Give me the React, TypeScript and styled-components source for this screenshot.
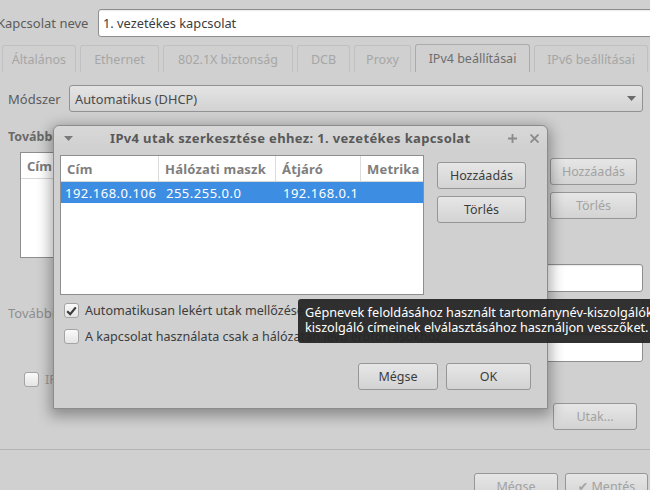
import React from "react";
import styled, { createGlobalStyle } from "styled-components";

const GlobalStyle = createGlobalStyle`
  html, body {
    margin: 0;
    padding: 0;
    background: #d0d0d0;
  }
  body {
    font-family: "Noto Sans", "DejaVu Sans", sans-serif;
    font-size: 12px;
    color: #3c3c3c;
  }
`;

const Screen = styled.div`
  position: relative;
  width: 650px;
  height: 490px;
  overflow: hidden;
  background: #d0d0d0;
`;

const MainWindow = styled.div`
  display: flex;
  flex-direction: column;
`;

const NameRow = styled.div`
  display: flex;
  align-items: center;
  gap: 12px;
  height: 28px;
  margin: 9px -20px 0 -3px;
`;

const Label = styled.span<{ $w?: number; $muted?: boolean }>`
  flex: 0 0 ${(p) => (p.$w ? `${p.$w}px` : "auto")};
  min-width: 0;
  color: ${(p) => (p.$muted ? "#8e8e8e" : "#5c5c5c")};
  font-size: 13px;
  white-space: nowrap;
`;

const Entry = styled.div`
  flex: 1;
  height: 28px;
  box-sizing: border-box;
  border: 1px solid #8e8e8e;
  border-radius: 3px;
  background: #fff;
  box-shadow: inset 0 1px 1px rgba(0, 0, 0, 0.08);
  display: flex;
  align-items: center;
  padding: 0 4px;
  color: #3c3c3c;
  font-size: 12.8px;
`;

const TabBar = styled.div`
  display: flex;
  gap: 4px;
  height: 28px;
  margin-top: 7px;
  padding-left: 2px;
`;

const Tab = styled.div<{ $w: number; $active?: boolean }>`
  flex: 0 0 ${(p) => p.$w}px;
  box-sizing: border-box;
  display: flex;
  align-items: center;
  justify-content: center;
  border: 1px solid ${(p) => (p.$active ? "#ababab" : "#c0c0c0")};
  border-bottom: none;
  border-radius: 3px 3px 0 0;
  margin-top: ${(p) => (p.$active ? 0 : 1)}px;
  color: ${(p) => (p.$active ? "#6e6e6e" : "#a6a6a6")};
  font-size: 12.5px;
  white-space: nowrap;
`;

const Page = styled.div`
  display: flex;
  flex-direction: column;
  padding: 0 7px 0 8px;
`;

const MethodRow = styled.div`
  display: flex;
  align-items: center;
  gap: 12px;
  height: 27px;
  margin-top: 13px;
`;

const Combo = styled.div`
  flex: 1;
  height: 27px;
  box-sizing: border-box;
  border: 1px solid #929292;
  border-radius: 3px;
  background: linear-gradient(#e4e4e4, #d2d2d2);
  display: flex;
  align-items: center;
  justify-content: space-between;
  padding: 0 6px 0 5px;
  color: #4a4a4a;
  font-size: 12.8px;
`;

const SectionTitle = styled.div`
  margin-top: 17px;
  line-height: 16px;
  font-weight: bold;
  font-size: 12.5px;
  color: #6a6a6a;
`;

const AddressArea = styled.div`
  display: grid;
  grid-template-columns: 1fr 87px;
  gap: 13px;
  margin: 7px 6px 0 12px;
`;

const ListBox = styled.div`
  height: 106px;
  box-sizing: border-box;
  border: 1px solid #8e8e8e;
  background: #fff;
`;

const ListHeader = styled.div`
  height: 26px;
  box-sizing: border-box;
  border-bottom: 1px solid #d8d8d8;
  display: flex;
  align-items: center;
  padding-left: 6px;
  font-weight: bold;
  font-size: 13px;
  color: #7c7c7c;
`;

const ButtonColumn = styled.div<{ $top: number }>`
  display: flex;
  flex-direction: column;
  gap: 7px;
  margin-top: ${(p) => p.$top}px;
`;

const Button = styled.div<{ $w?: number; $disabled?: boolean }>`
  width: ${(p) => (p.$w ? `${p.$w}px` : "auto")};
  height: 27px;
  box-sizing: border-box;
  border: 1px solid #969696;
  border-radius: 3px;
  background: linear-gradient(#e6e6e6, #d3d3d3);
  display: flex;
  align-items: center;
  justify-content: center;
  gap: 5px;
  color: ${(p) => (p.$disabled ? "#a2a2a2" : "#3c3c3c")};
  font-size: 12.5px;
  white-space: nowrap;
`;

const EntryGrid = styled.div`
  display: grid;
  grid-template-columns: max-content 1fr;
  column-gap: 12px;
  row-gap: 7px;
  align-items: center;
  margin-top: 6px;
`;

const GridLabel = styled.span`
  justify-self: end;
  color: #8e8e8e;
  font-size: 13px;
  white-space: nowrap;
`;

const CheckRow = styled.label<{ $top: number; $left?: number; $muted?: boolean }>`
  display: flex;
  align-items: center;
  gap: 6px;
  height: 15px;
  margin-top: ${(p) => p.$top}px;
  margin-left: ${(p) => p.$left || 0}px;
  color: ${(p) => (p.$muted ? "#9a9a9a" : "#3c3c3c")};
  font-size: 12.6px;
  white-space: nowrap;
`;

const CheckBox = styled.span`
  flex: 0 0 15px;
  height: 15px;
  box-sizing: border-box;
  border: 1px solid #a4a4a4;
  border-radius: 3px;
  background: linear-gradient(#fafafa, #e4e4e4);
  display: flex;
  align-items: center;
  justify-content: center;
`;

const RoutesRow = styled.div`
  display: flex;
  justify-content: flex-end;
  margin: 16px 6px 0 0;
`;

const Separator = styled.div`
  height: 1px;
  background: #b4b4b4;
  margin-top: 19px;
`;

const ActionRow = styled.div`
  display: flex;
  justify-content: flex-end;
  gap: 7px;
  margin-top: 23px;
  padding-right: 2px;
`;

/* the modal dialog floats over the main window */
const Dialog = styled.div`
  position: absolute;
  left: 53px;
  top: 125px;
  width: 495px;
  height: 284px;
  box-sizing: border-box;
  border: 1px solid #8c8c8c;
  border-radius: 6px 6px 0 0;
  background: #d0d0d0;
  box-shadow: 0 4px 14px 3px rgba(0, 0, 0, 0.33);
  display: flex;
  flex-direction: column;
`;

const TitleBar = styled.div`
  height: 24px;
  display: flex;
  align-items: center;
  padding: 0 8px 0 10px;
  border-radius: 6px 6px 0 0;
  background: linear-gradient(#d8d8d8, #d0d0d0);
`;

const Title = styled.div`
  flex: 1;
  padding-left: 37px;
  font-weight: bold;
  color: #595959;
  font-size: 13px;
  letter-spacing: 0.35px;
  white-space: nowrap;
`;

const TitleButtons = styled.div`
  display: flex;
  gap: 13px;
  align-items: center;
`;

const DialogBody = styled.div`
  display: flex;
  flex-direction: column;
  padding: 5px 16px 0 6px;
`;

const TopRow = styled.div`
  display: flex;
  gap: 13px;
`;

const Tree = styled.div`
  width: 364px;
  height: 140px;
  box-sizing: border-box;
  border: 1px solid #8e8e8e;
  background: #fff;
`;

const TreeRow = styled.div<{ $header?: boolean; $selected?: boolean }>`
  display: grid;
  grid-template-columns: 98px 117px 85px 1fr;
  height: ${(p) => (p.$header ? 26 : 21)}px;
  box-sizing: border-box;
  border-bottom: ${(p) => (p.$header ? "1px solid #d6d6d6" : "none")};
  background: ${(p) => (p.$selected ? "#3d8ee2" : "transparent")};
  color: ${(p) => (p.$header ? "#7e7e7e" : p.$selected ? "#fff" : "#3c3c3c")};
  font-weight: ${(p) => (p.$header ? "bold" : "normal")};
  font-size: 13px;
  letter-spacing: ${(p) => (p.$header ? 0.2 : 0.5)}px;
`;

const Cell = styled.div<{ $header?: boolean; $first?: boolean; $last?: boolean }>`
  display: flex;
  align-items: center;
  padding-left: ${(p) => (p.$header ? 6 : p.$first ? 4 : 7)}px;
  border-right: ${(p) =>
    p.$header && !p.$last ? "1px solid #dcdcdc" : "none"};
  white-space: nowrap;
  overflow: hidden;
`;

const CheckList = styled.div`
  display: flex;
  flex-direction: column;
  gap: 11px;
  margin: 8px 0 0 4px;
`;

const Footer = styled.div`
  display: flex;
  justify-content: flex-end;
  gap: 8px;
  margin-top: 19px;
`;

const Tooltip = styled.div`
  position: absolute;
  left: 298px;
  top: 299px;
  width: 380px;
  height: 44px;
  box-sizing: border-box;
  padding: 6px 7px;
  background: rgba(38, 38, 38, 0.95);
  border-radius: 3px;
  color: #fff;
  font-size: 12.7px;
  line-height: 15px;
  white-space: nowrap;
`;

const Check = () => (
  <svg width="11" height="10" viewBox="0 0 11 10">
    <path d="M1.2 5.2 L4.2 8.2 L9.8 1.4" fill="none" stroke="#3a3a3a" strokeWidth="2.2" />
  </svg>
);

const DownArrow = ({ color = "#6a6a6a" }: { color?: string }) => (
  <svg width="9" height="5" viewBox="0 0 9 5">
    <path d="M0 0 H9 L4.5 5 Z" fill={color} />
  </svg>
);

const PlusIcon = () => (
  <svg width="9" height="9" viewBox="0 0 9 9">
    <path d="M4.5 0 V9 M0 4.5 H9" stroke="#8a8a8a" strokeWidth="1.8" />
  </svg>
);

const CloseIcon = () => (
  <svg width="9" height="9" viewBox="0 0 9 9">
    <path d="M0.5 0.5 L8.5 8.5 M8.5 0.5 L0.5 8.5" stroke="#8a8a8a" strokeWidth="1.8" />
  </svg>
);

const tabs = [
  { label: "Általános", w: 74 },
  { label: "Ethernet", w: 79 },
  { label: "802.1X biztonság", w: 130 },
  { label: "DCB", w: 53 },
  { label: "Proxy", w: 57 },
  { label: "IPv4 beállításai", w: 115, active: true },
  { label: "IPv6 beállításai", w: 114 },
];

const routes = [
  { address: "192.168.0.106", mask: "255.255.0.0", gateway: "192.168.0.1", metric: "" },
];

export default function App() {
  return (
    <>
      <GlobalStyle />
      <Screen>
        <MainWindow>
          <NameRow>
            <Label $w={89}>Kapcsolat neve</Label>
            <Entry>1. vezetékes kapcsolat</Entry>
          </NameRow>

          <TabBar>
            {tabs.map((t) => (
              <Tab key={t.label} $w={t.w} $active={t.active}>
                {t.label}
              </Tab>
            ))}
          </TabBar>

          <Page>
            <MethodRow>
              <Label $w={49}>Módszer</Label>
              <Combo>
                Automatikus (DHCP)
                <DownArrow />
              </Combo>
            </MethodRow>

            <SectionTitle>További statikus címek</SectionTitle>
            <AddressArea>
              <ListBox>
                <ListHeader>Cím</ListHeader>
              </ListBox>
              <ButtonColumn $top={6}>
                <Button $disabled>Hozzáadás</Button>
                <Button $disabled>Törlés</Button>
              </ButtonColumn>
            </AddressArea>

            <EntryGrid>
              <GridLabel>Átjáró</GridLabel>
              <Entry />
              <GridLabel>További DNS-kiszolgálók</GridLabel>
              <Entry />
              <GridLabel>Kliensazonosító</GridLabel>
              <Entry />
            </EntryGrid>

            <CheckRow $top={10} $left={16} $muted>
              <CheckBox />
              IPv4-címzés szükséges a kapcsolat létrejöttéhez
            </CheckRow>

            <RoutesRow>
              <Button $w={84} $disabled>
                Utak…
              </Button>
            </RoutesRow>
          </Page>

          <Separator />

          <ActionRow>
            <Button $w={84} $disabled>
              Mégse
            </Button>
            <Button $w={83} $disabled>
              ✔ Mentés
            </Button>
          </ActionRow>
        </MainWindow>

        <Dialog>
          <TitleBar>
            <DownArrow color="#7a7a7a" />
            <Title>IPv4 utak szerkesztése ehhez: 1. vezetékes kapcsolat</Title>
            <TitleButtons>
              <PlusIcon />
              <CloseIcon />
            </TitleButtons>
          </TitleBar>
          <DialogBody>
            <TopRow>
              <Tree>
                <TreeRow $header>
                  <Cell $header>Cím</Cell>
                  <Cell $header>Hálózati maszk</Cell>
                  <Cell $header>Átjáró</Cell>
                  <Cell $header $last>Metrika</Cell>
                </TreeRow>
                {routes.map((r) => (
                  <TreeRow key={r.address} $selected>
                    <Cell $first>{r.address}</Cell>
                    <Cell>{r.mask}</Cell>
                    <Cell>{r.gateway}</Cell>
                    <Cell>{r.metric}</Cell>
                  </TreeRow>
                ))}
              </Tree>
              <ButtonColumn $top={7}>
                <Button $w={89}>Hozzáadás</Button>
                <Button $w={89}>Törlés</Button>
              </ButtonColumn>
            </TopRow>

            <CheckList>
              <CheckRow $top={0}>
                <CheckBox>
                  <Check />
                </CheckBox>
                Automatikusan lekért utak mellőzése
              </CheckRow>
              <CheckRow $top={0}>
                <CheckBox />
                A kapcsolat használata csak a hálózatán lévő erőforrásokhoz
              </CheckRow>
            </CheckList>

            <Footer>
              <Button $w={80}>Mégse</Button>
              <Button $w={85}>OK</Button>
            </Footer>
          </DialogBody>
        </Dialog>

        <Tooltip>
          Gépnevek feloldásához használt tartománynév-kiszolgálók IP-címei. Több
          <br />
          kiszolgáló címeinek elválasztásához használjon vesszőket.
        </Tooltip>
      </Screen>
    </>
  );
}
